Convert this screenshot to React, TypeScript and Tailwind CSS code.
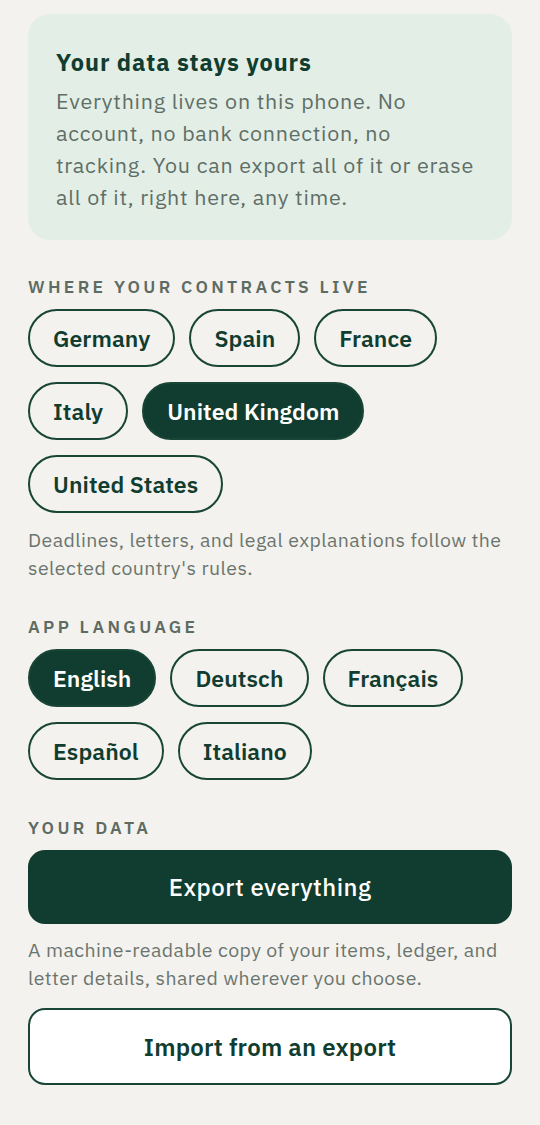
import React, { useState } from 'react';

const COUNTRIES = ['Germany', 'Spain', 'France', 'Italy', 'United Kingdom', 'United States'];
const LANGUAGES = ['English', 'Deutsch', 'Français', 'Español', 'Italiano'];

function Chip({ label, active, onClick }: { label: string; active: boolean; onClick: () => void }) {
  return (
    <button
      onClick={onClick}
      className={`h-[58px] px-[23px] rounded-full border-2 border-[#184536] text-[23px] font-semibold tracking-[0.003em] ${
        active ? 'bg-[#103d2f] border-[#103d2f] text-white' : 'bg-transparent text-[#103d2f]'
      }`}
    >
      {label}
    </button>
  );
}

function SectionLabel({ children }: { children: React.ReactNode }) {
  return (
    <div className="text-[17.5px] font-semibold tracking-[0.19em] text-[#5d6b62] uppercase leading-[22px]">
      {children}
    </div>
  );
}

export default function App() {
  const [country, setCountry] = useState('United Kingdom');
  const [lang, setLang] = useState('English');

  return (
    <div
      className="min-h-screen bg-[#f3f2ee] px-[28px] pt-[14px] pb-10"
      style={{ fontFamily: '"IBM Plex Sans", "Noto Sans", sans-serif' }}
    >
      {/* Privacy card */}
      <div className="rounded-[22px] bg-[#e3eee6] px-[28px] pt-[33px] pb-[27px]">
        <div className="text-[23.5px] font-bold text-[#103d2f] leading-[30px] tracking-[0.04em]">
          Your data stays yours
        </div>
        <p className="mt-[8px] text-[21.5px] leading-[32px] text-[#5f6f66] tracking-[0.035em]">
          Everything lives on this phone. No account, no bank connection, no tracking. You can export all of it or
          erase all of it, right here, any time.
        </p>
      </div>

      {/* Country */}
      <div className="mt-[36px]">
        <SectionLabel>Where your contracts live</SectionLabel>
        <div className="mt-[11px] flex flex-wrap gap-x-[14px] gap-y-[15px]">
          {COUNTRIES.map(c => (
            <Chip key={c} label={c} active={country === c} onClick={() => setCountry(c)} />
          ))}
        </div>
        <p className="mt-[13px] text-[19.5px] leading-[28px] text-[#6b756f] tracking-[0.022em]">
          Deadlines, letters, and legal explanations follow the selected country's rules.
        </p>
      </div>

      {/* Language */}
      <div className="mt-[34px]">
        <SectionLabel>App language</SectionLabel>
        <div className="mt-[11px] flex flex-wrap gap-x-[14px] gap-y-[15px]">
          {LANGUAGES.map(l => (
            <Chip key={l} label={l} active={lang === l} onClick={() => setLang(l)} />
          ))}
        </div>
      </div>

      {/* Data */}
      <div className="mt-[37px]">
        <SectionLabel>Your data</SectionLabel>
        <button className="mt-[11px] w-full h-[74px] rounded-[17px] bg-[#103d2f] text-white text-[24px] font-medium tracking-[0.02em]">
          Export everything
        </button>
        <p className="mt-[12px] text-[19.5px] leading-[28px] text-[#6b756f] tracking-[0.022em]">
          A machine-readable copy of your items, ledger, and letter details, shared wherever you choose.
        </p>
        <button className="mt-[16px] w-full h-[77px] rounded-[17px] bg-white border-2 border-[#184536] text-[#103d2f] text-[24px] font-semibold tracking-[0.01em]">
          Import from an export
        </button>
      </div>
    </div>
  );
}
